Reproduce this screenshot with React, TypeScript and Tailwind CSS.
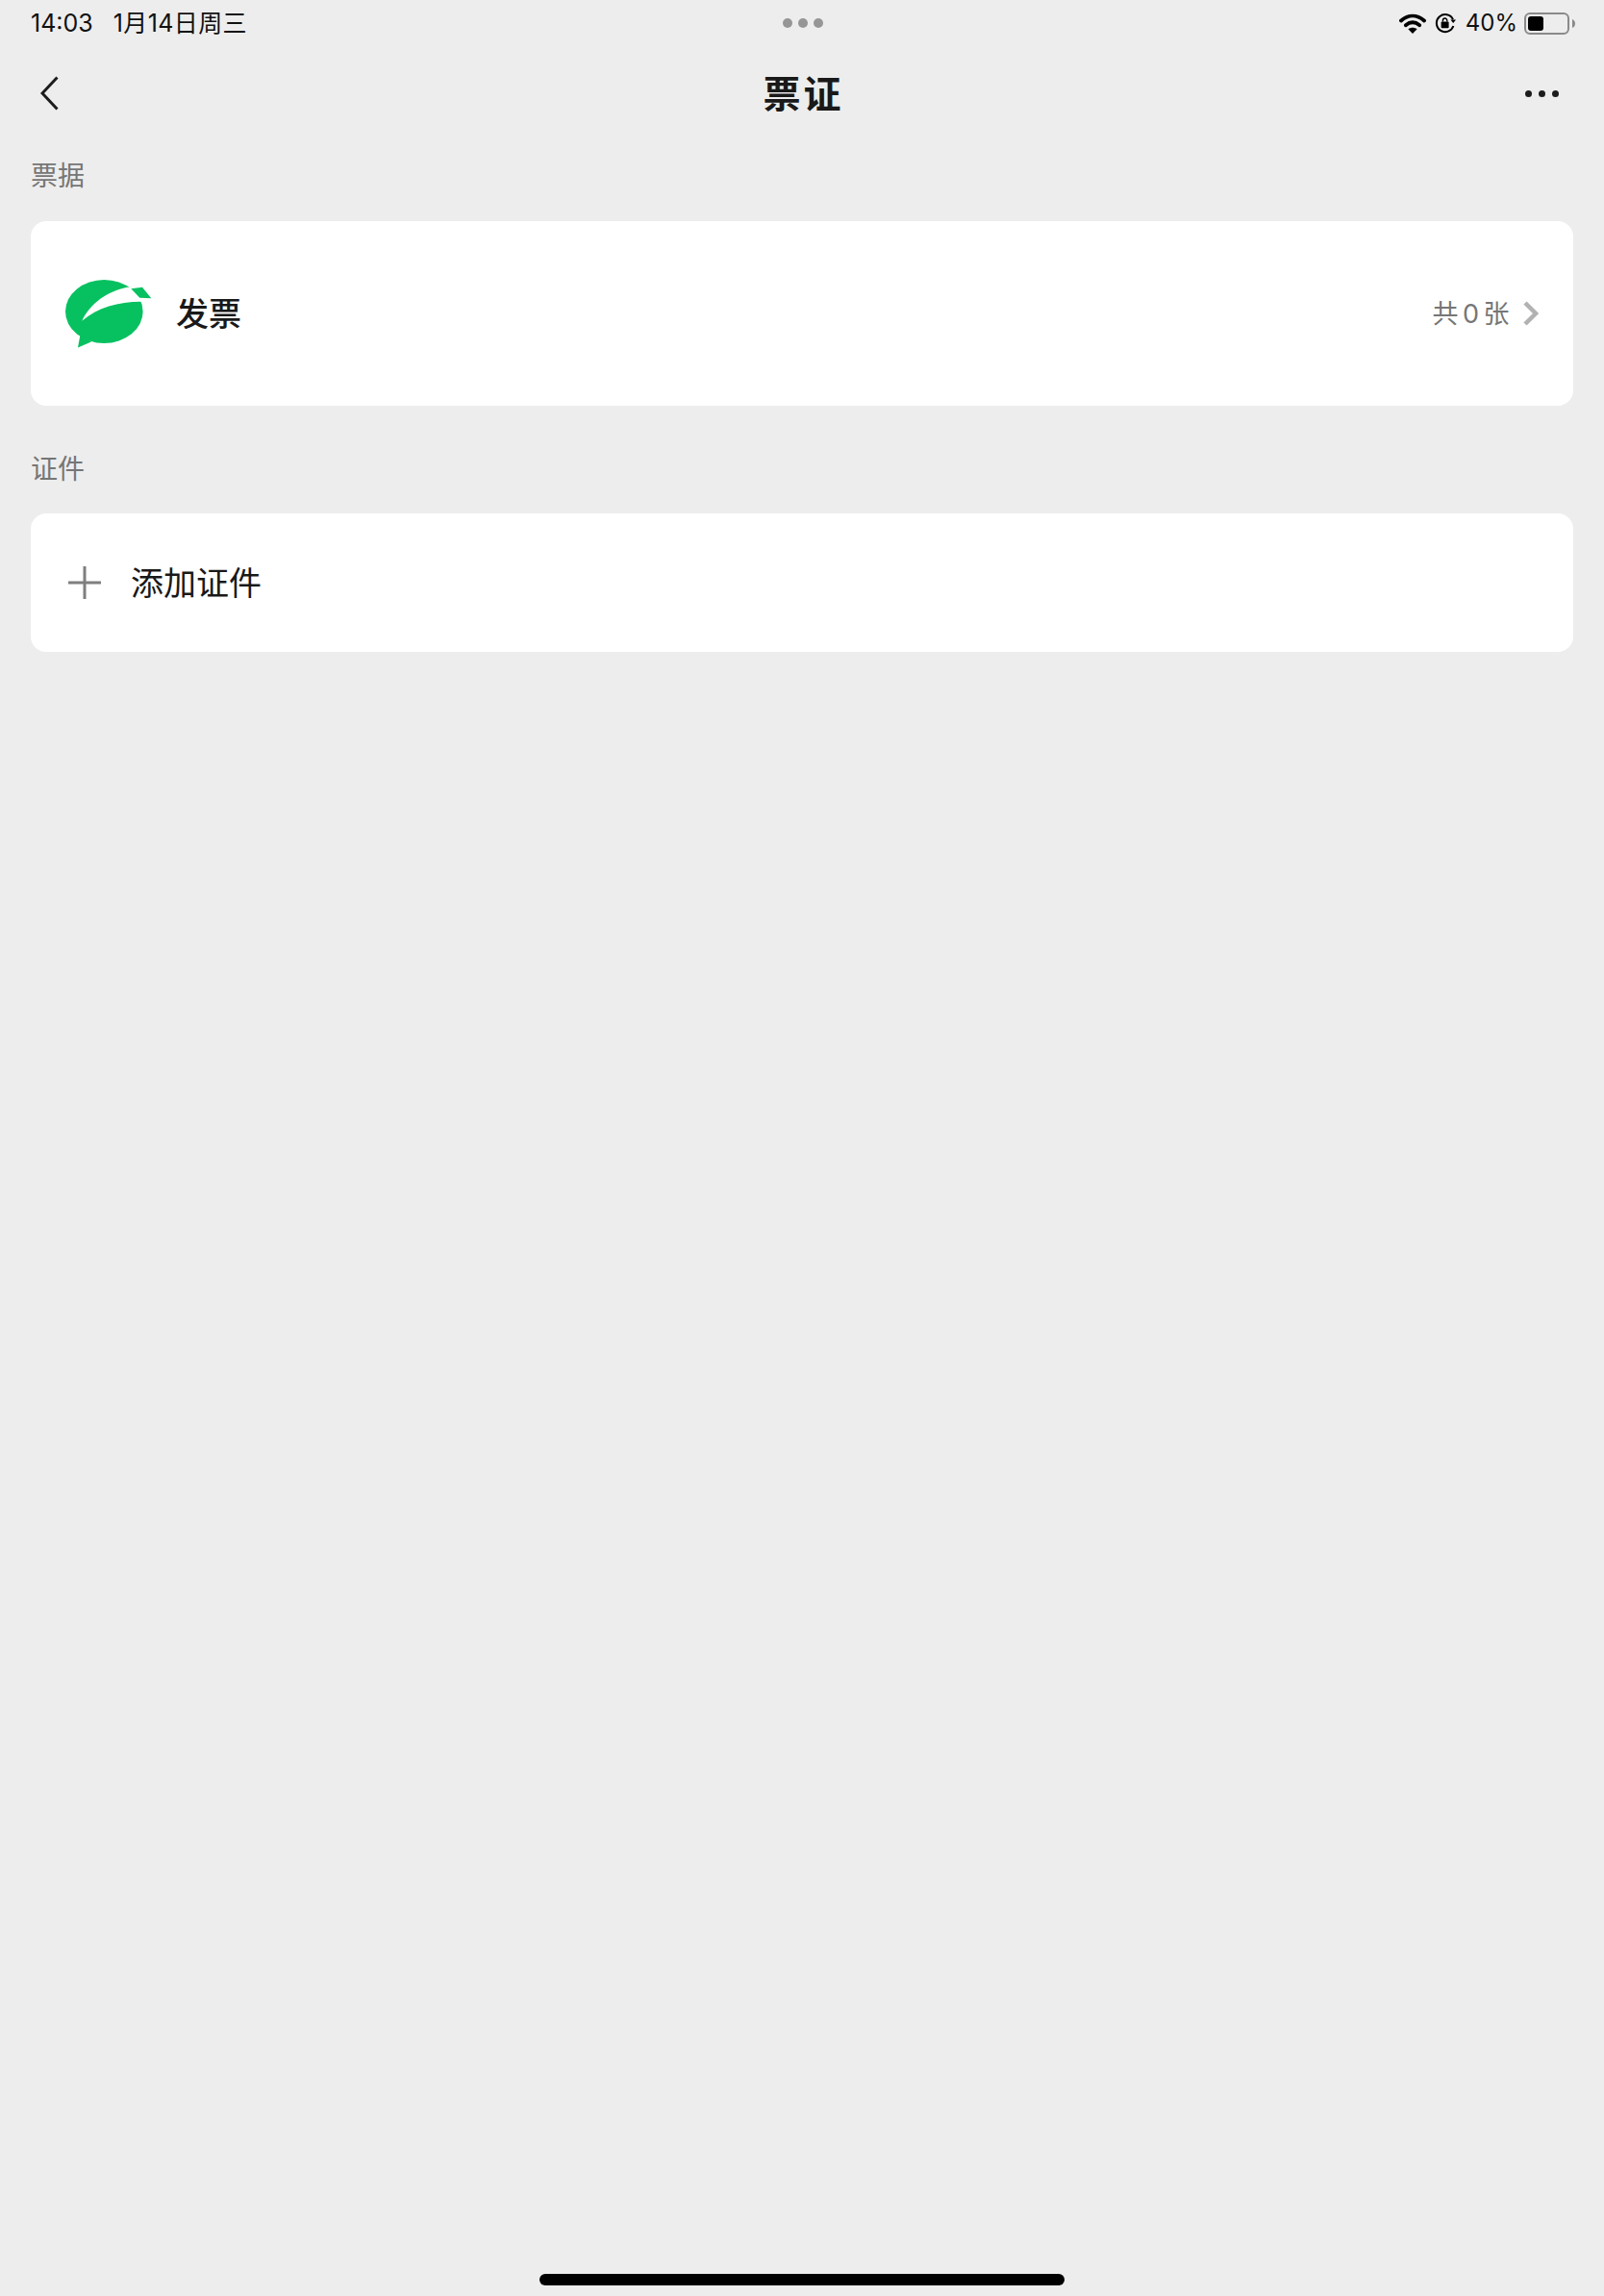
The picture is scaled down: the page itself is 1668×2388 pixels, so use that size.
const sans = "font-['Inter','Noto_Sans_CJK_SC',sans-serif]";

function StatusBar() {
  return (
    <div className="grid h-[48px] grid-cols-3 items-center pl-[32px] pr-[30px] text-[25px] leading-none text-[#111111]">
      <div className="flex items-center gap-[21px]">
        <span>14:03</span>
        <span className="tracking-[0.4px]">1月14日周三</span>
      </div>
      <div className="flex items-center justify-center gap-[6px]">
        <div className="h-[10px] w-[10px] rounded-full bg-[#969696]" />
        <div className="h-[10px] w-[10px] rounded-full bg-[#969696]" />
        <div className="h-[10px] w-[10px] rounded-full bg-[#969696]" />
      </div>
      <div className="flex items-center justify-end">
        <svg width="28" height="21" viewBox="0 0 28 21" fill="none" stroke="#000" strokeWidth="3.8" strokeLinecap="round">
          <path d="M2 7.5C9.5 1 18.5 1 26 7.5" />
          <path d="M6.8 12.2C11.5 8.4 16.5 8.4 21.2 12.2" />
          <path d="M14 21L9.4 16.2C12.2 14.2 15.8 14.2 18.6 16.2Z" fill="#000" stroke="none" />
        </svg>
        <svg className="ml-[9px]" width="22" height="22" viewBox="0 0 22 22" fill="none">
          <path d="M19 7.2A9 9 0 1 0 19.4 14" stroke="#000" strokeWidth="2" />
          <path d="M16.4 7.4L22 7.4L19.2 11Z" fill="#000" />
          <rect x="6.6" y="9.6" width="8" height="6.6" rx="1" fill="#000" />
          <path d="M8.4 9.6V8.2A2.2 2.2 0 0 1 12.8 8.2V9.6" stroke="#000" strokeWidth="1.4" />
        </svg>
        <span className="ml-[10px] text-[24px]">40%</span>
        <div className="ml-[7px] h-[23px] w-[47px] rounded-[6px] border-[2px] border-[#8a8a8a] p-[2px]">
          <div className="h-full w-[16px] rounded-[3px] bg-black" />
        </div>
        <svg className="ml-[3px]" width="3" height="9" viewBox="0 0 3 9">
          <path d="M0 0C2 1 3 2.5 3 4.5C3 6.5 2 8 0 9Z" fill="#8a8a8a" />
        </svg>
      </div>
    </div>
  );
}

function NavBar() {
  return (
    <div className="grid h-[98px] grid-cols-3 items-center pl-[42px] pr-[47px]">
      <svg width="19" height="36" viewBox="0 0 19 36" fill="none" stroke="#1c1c1c" strokeWidth="3">
        <path d="M17.5 1.5L2 18L17.5 34.5" />
      </svg>
      <h1 className="pl-[8px] pt-[1px] text-center text-[39px] font-semibold leading-none tracking-[3px] text-[#191919]">票证</h1>
      <div className="flex items-center justify-end gap-[7px]">
        <div className="h-[7px] w-[7px] rounded-full bg-[#1c1c1c]" />
        <div className="h-[7px] w-[7px] rounded-full bg-[#1c1c1c]" />
        <div className="h-[7px] w-[7px] rounded-full bg-[#1c1c1c]" />
      </div>
    </div>
  );
}

function InvoiceLogo() {
  return (
    <svg width="90" height="71" viewBox="0 0 90 71">
      <ellipse cx="40.3" cy="33" rx="40.3" ry="33" fill="#07c160" />
      <path d="M13 70.5L15.5 57L27 64.5Z" fill="#07c160" />
      <path d="M17.3 42.7C26 24 44 12 64 7.7L82 10L82 22.7C58 22 34 28 17.3 42.7Z" fill="#fff" />
      <path d="M68.3 9.3L80 7.7L89.3 19.3L77.3 18.7Z" fill="#07c160" />
    </svg>
  );
}

export default function App() {
  return (
    <div className={`flex h-[2388px] flex-col bg-[#ededed] ${sans}`}>
      <StatusBar />
      <NavBar />
      <div className="flex flex-1 flex-col px-[32px]">
        <div className="flex h-[84px] items-start pt-[23px] text-[28px] leading-[28px] text-[#767676]">票据</div>
        <div className="flex h-[192px] items-center rounded-[16px] bg-white pl-[36px] pr-[36px]">
          <InvoiceLogo />
          <span className="ml-[25px] pt-[1px] text-[34px] font-medium leading-none text-[#191919]">发票</span>
          <span className="ml-auto text-[27px] leading-none tracking-[1.5px] text-[#767676]">共<span className="mx-[3px]">0</span>张</span>
          <svg className="ml-[13px]" width="16" height="26" viewBox="0 0 16 26" fill="none" stroke="#b2b2b2" strokeWidth="4.5">
            <path d="M2 2L13 13L2 24" />
          </svg>
        </div>
        <div className="flex h-[112px] items-start pt-[52px] text-[28px] leading-[28px] text-[#767676]">证件</div>
        <div className="flex h-[144px] items-center rounded-[16px] bg-white pl-[39px]">
          <svg width="34" height="34" viewBox="0 0 34 34" stroke="#7f7f7f" strokeWidth="3">
            <path d="M17 0V34M0 17H34" />
          </svg>
          <span className="ml-[31px] pt-[1px] text-[34px] leading-none text-[#191919]">添加证件</span>
        </div>
        <div className="mt-auto mb-[11px] h-[12px] w-[546px] self-center rounded-full bg-black" />
      </div>
    </div>
  );
}
